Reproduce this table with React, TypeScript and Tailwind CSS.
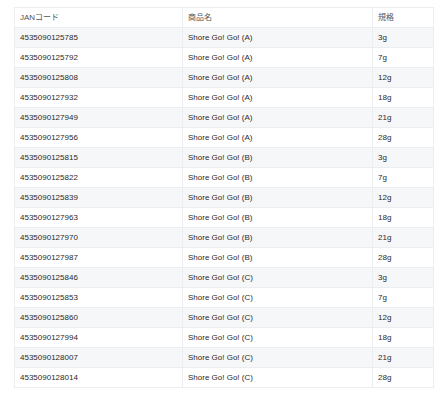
const rows: [string, string, string][] = [
  ["4535090125785", "Shore Go! Go! (A)", "3g"],
  ["4535090125792", "Shore Go! Go! (A)", "7g"],
  ["4535090125808", "Shore Go! Go! (A)", "12g"],
  ["4535090127932", "Shore Go! Go! (A)", "18g"],
  ["4535090127949", "Shore Go! Go! (A)", "21g"],
  ["4535090127956", "Shore Go! Go! (A)", "28g"],
  ["4535090125815", "Shore Go! Go! (B)", "3g"],
  ["4535090125822", "Shore Go! Go! (B)", "7g"],
  ["4535090125839", "Shore Go! Go! (B)", "12g"],
  ["4535090127963", "Shore Go! Go! (B)", "18g"],
  ["4535090127970", "Shore Go! Go! (B)", "21g"],
  ["4535090127987", "Shore Go! Go! (B)", "28g"],
  ["4535090125846", "Shore Go! Go! (C)", "3g"],
  ["4535090125853", "Shore Go! Go! (C)", "7g"],
  ["4535090125860", "Shore Go! Go! (C)", "12g"],
  ["4535090127994", "Shore Go! Go! (C)", "18g"],
  ["4535090128007", "Shore Go! Go! (C)", "21g"],
  ["4535090128014", "Shore Go! Go! (C)", "28g"],
];

export default function App() {
  return (
    <div className="bg-white pt-[7px] pl-[14px] w-[436px] h-[407px] font-['Liberation_Sans','Noto_Sans_CJK_JP',sans-serif] text-[8px]">
      <table className="w-[419px] border-collapse table-fixed">
        <colgroup>
          <col className="w-[168px]" />
          <col className="w-[190px]" />
          <col className="w-[61px]" />
        </colgroup>
        <thead>
          <tr className="h-[20px] text-[#555]">
            <th className="border border-[#ebedf1] px-[5px] text-left font-normal">JANコード</th>
            <th className="border border-[#ebedf1] px-[5px] text-left font-normal">商品名</th>
            <th className="border border-[#ebedf1] px-[5px] text-left font-normal">規格</th>
          </tr>
        </thead>
        <tbody>
          {rows.map((r, i) => (
            <tr key={i} className={`h-[20px] text-[#2a2a2a] ${i % 2 === 0 ? "bg-[#f5f7f9]" : "bg-white"}`}>
              <td className="border border-[#ebedf1] px-[5px]">{r[0]}</td>
              <td className="border border-[#ebedf1] px-[5px]">{r[1]}</td>
              <td className="border border-[#ebedf1] px-[5px]">{r[2]}</td>
            </tr>
          ))}
        </tbody>
      </table>
    </div>
  );
}
